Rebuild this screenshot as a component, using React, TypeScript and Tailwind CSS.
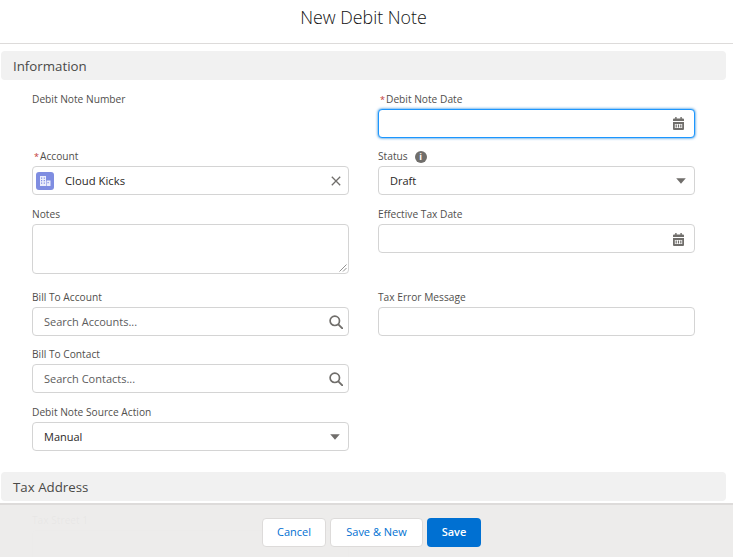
import type { ReactNode } from "react";

function CalendarIcon() {
  return (
    <svg width="11" height="13" viewBox="0 0 11 13" className="shrink-0">
      <rect x="2.200" y="0" width="1.400" height="2.500" fill="#706e6b" />
      <rect x="7.400" y="0" width="1.400" height="2.500" fill="#706e6b" />
      <path d="M1 1.500h9a1 1 0 0 1 1 1V4H0V2.500a1 1 0 0 1 1-1z" fill="#706e6b" />
      <path fillRule="evenodd" d="M0 5h11v7a1 1 0 0 1-1 1H1a1 1 0 0 1-1-1zM1.800 7v4h7.400V7z" fill="#706e6b" />
      <path d="M2.600 7.600h1.200v2.800H2.600zM4.900 7.600h1.200v2.800H4.900zM7.200 7.600h1.200v2.800H7.200z" fill="#706e6b" />
    </svg>
  );
}

function SearchIcon() {
  return (
    <svg width="14" height="14" viewBox="0 0 14 14" fill="none" className="shrink-0">
      <circle cx="5.800" cy="5.800" r="4.700" stroke="#706e6b" strokeWidth="1.700" />
      <path d="M9.300 9.300l4 4" stroke="#706e6b" strokeWidth="1.900" strokeLinecap="round" />
    </svg>
  );
}

function Caret() {
  return (
    <svg width="10" height="6" viewBox="0 0 10 6" className="shrink-0">
      <path d="M0.200 0.200h9.600L5 5.800z" fill="#706e6b" />
    </svg>
  );
}

function AccountIcon() {
  return (
    <span className="flex h-[18px] w-[18px] shrink-0 items-center justify-center rounded-[3px] bg-[#7f8de1]">
      <svg width="12" height="12" viewBox="0 0 12 12">
        <path
          fillRule="evenodd"
          d="M1 1h6v10H1zM2 2.500v1.200h1.200V2.500zM4.700 2.500v1.200h1.200V2.500zM2 5v1.200h1.200V5zM4.700 5v1.200h1.200V5zM2 7.500v1.200h1.200V7.500zM4.700 7.500v1.200h1.200V7.500z"
          fill="#fff"
          fillOpacity="0.85"
        />
        <path fillRule="evenodd" d="M7.600 5.500H11.500V11H7.600zM8.500 7v1.200h1.200V7z" fill="#fff" fillOpacity="0.85" />
      </svg>
    </span>
  );
}

function Label({ text, required, children }: { text: string; required?: boolean; children?: ReactNode }) {
  return (
    <div className="flex h-[19px] items-center text-[10.200px] leading-none text-[#514f4d]">
      {required && <span className="ml-[2px] w-[6px] text-[9px] text-[#c23934]">*</span>}
      <span>{text}</span>
      {children}
    </div>
  );
}

function Box({ children, className }: { children?: ReactNode; className?: string }) {
  return (
    <div
      className={`flex h-[29px] items-center justify-between rounded-[4px] border border-[#d4d4d4] bg-white pl-[11px] pt-px text-[11px] text-[#2b2826] ${className ?? "pr-[10px]"}`}
    >
      {children}
    </div>
  );
}

function SectionBar({ title }: { title: string }) {
  return (
    <div className="ml-px mr-[7px] flex h-[29px] items-center rounded-[4px] bg-[#f1f1f1] pl-[12px] pt-[2px] text-[13.300px] text-[#4a4a48]">
      {title}
    </div>
  );
}

export default function App() {
  return (
    <div className="relative h-[557px] w-[733px] overflow-hidden bg-white font-['Open_Sans',sans-serif]">
      <div className="flex h-[44px] items-center justify-center border-b border-[#dddbda] pb-[9px] pr-[6px] text-[17.800px] font-light text-[#111111]">
        New Debit Note
      </div>

      <div className="mt-[7px]">
        <SectionBar title="Information" />
      </div>

      <div className="mt-[10px] grid grid-cols-[317px_317px] gap-x-[29px] pl-[32px]">
        <div className="h-[57px]">
          <Label text="Debit Note Number" />
        </div>
        <div className="h-[57px]">
          <Label text="Debit Note Date" required />
          <div className="flex h-[29px] items-center justify-end rounded-[4px] border border-[#1b96ff] bg-white pr-[10px] shadow-[0_0_3px_#0176d3]">
            <CalendarIcon />
          </div>
        </div>

        <div className="h-[58px]">
          <Label text="Account" required />
          <div className="flex h-[29px] items-center rounded-[4px] border border-[#d4d4d4] bg-white pl-[3px] pr-[7px] text-[11.300px] text-[#2b2826]">
            <AccountIcon />
            <span className="ml-[11px] flex-1 pt-px">Cloud Kicks</span>
            <svg width="10" height="10" viewBox="0 0 10 10" fill="none">
              <path d="M0.800 0.800l8.400 8.400M9.200 0.800l-8.400 8.400" stroke="#706e6b" strokeWidth="1.300" />
            </svg>
          </div>
        </div>
        <div className="h-[58px]">
          <Label text="Status">
            <span className="ml-[7px] flex h-[12px] w-[12px] items-center justify-center rounded-full bg-[#706e6b] text-[9px] font-bold text-white">
              i
            </span>
          </Label>
          <Box className="pr-[8px]">
            <span>Draft</span>
            <Caret />
          </Box>
        </div>

        <div className="h-[83px]">
          <Label text="Notes" />
          <div className="relative h-[50px] rounded-[4px] border border-[#d4d4d4] bg-white">
            <svg width="8" height="8" viewBox="0 0 8 8" className="absolute bottom-[1px] right-[1px]">
              <path d="M0.500 7.500L7.500 0.500M4 7.500L7.500 4" stroke="#767676" strokeWidth="0.800" />
            </svg>
          </div>
        </div>
        <div className="h-[83px]">
          <Label text="Effective Tax Date" />
          <Box>
            <span />
            <CalendarIcon />
          </Box>
        </div>

        <div className="h-[57px]">
          <Label text="Bill To Account" />
          <Box className="pr-[5px]">
            <span className="text-[#5c5c5c]">Search Accounts...</span>
            <SearchIcon />
          </Box>
        </div>
        <div className="h-[57px]">
          <Label text="Tax Error Message" />
          <Box />
        </div>

        <div className="h-[58px]">
          <Label text="Bill To Contact" />
          <Box className="pr-[5px]">
            <span className="text-[#5c5c5c]">Search Contacts...</span>
            <SearchIcon />
          </Box>
        </div>
        <div className="h-[58px]" />

        <div className="h-[69px]">
          <Label text="Debit Note Source Action" />
          <Box className="pr-[8px]">
            <span>Manual</span>
            <Caret />
          </Box>
        </div>
        <div className="h-[69px]" />
      </div>

      <SectionBar title="Tax Address" />

      <div className="mt-[10px] grid grid-cols-[317px_317px] gap-x-[29px] pl-[32px]">
        <div>
          <Label text="Tax Street 1" />
          <div className="h-[50px] rounded-[4px] border border-[#d4d4d4] bg-white" />
        </div>
      </div>

      <div className="absolute inset-x-0 bottom-0 flex h-[54px] items-start justify-center gap-[4px] border-t-2 border-[#dddbda] bg-[#ecebea]/[0.97] pl-[10px] pt-[13px] text-[11px]">
        <button className="h-[29px] w-[64px] rounded-[4px] border border-[#dddbda] bg-white text-[#0070d2]">Cancel</button>
        <button className="h-[29px] w-[93px] rounded-[4px] border border-[#dddbda] bg-white text-[#0070d2]">Save &amp; New</button>
        <button className="h-[29px] w-[54px] rounded-[4px] bg-[#0070d2] font-semibold text-white">Save</button>
      </div>
    </div>
  );
}
